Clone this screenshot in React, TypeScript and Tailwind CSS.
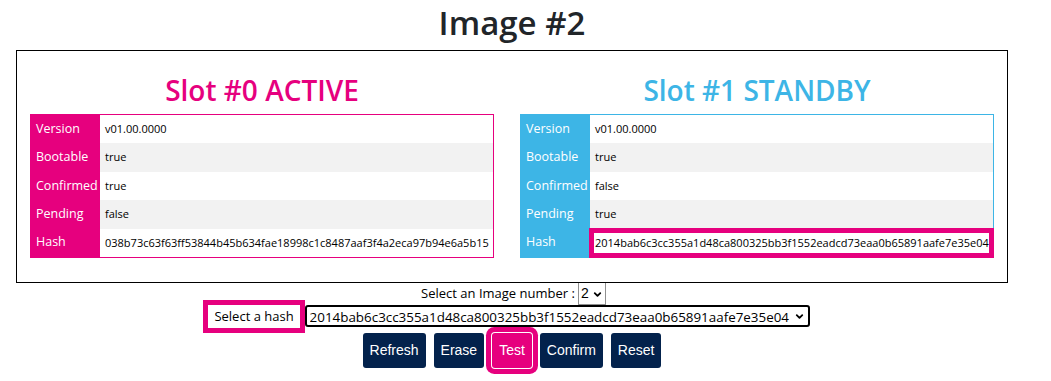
import { ChevronDown } from 'lucide-react'

type Row = { label: string; value: string }

const slot0: Row[] = [
  { label: 'Version', value: 'v01.00.0000' },
  { label: 'Bootable', value: 'true' },
  { label: 'Confirmed', value: 'true' },
  { label: 'Pending', value: 'false' },
  { label: 'Hash', value: '038b73c63f63ff53844b45b634fae18998c1c8487aaf3f4a2eca97b94e6a5b15' },
]

const slot1: Row[] = [
  { label: 'Version', value: 'v01.00.0000' },
  { label: 'Bootable', value: 'true' },
  { label: 'Confirmed', value: 'false' },
  { label: 'Pending', value: 'true' },
  { label: 'Hash', value: '2014bab6c3cc355a1d48ca800325bb3f1552eadcd73eaa0b65891aafe7e35e04' },
]

interface SlotTableProps {
  title: string
  rows: Row[]
  tone: 'active' | 'standby'
  highlightHash?: boolean
}

function SlotTable({ title, rows, tone, highlightHash = false }: SlotTableProps) {
  const active = tone === 'active'
  return (
    <div className={`flex flex-col items-center ${active ? 'w-[464px]' : 'w-[474px]'}`}>
      <h2
        className={`text-[28px] font-semibold leading-[38px] ${active ? 'text-[#e6007e]' : 'text-[#3db5e6]'}`}
      >
        {title}
      </h2>
      <div
        className={`mt-[5px] grid w-full grid-cols-[69px_1fr] border ${active ? 'border-[#e6007e]' : 'border-[#3db5e6]'}`}
      >
        {rows.map((row, index) => {
          const striped = index % 2 === 1
          const isHash = row.label === 'Hash'
          return (
            <div key={row.label} className="contents">
              <div
                className={`flex h-[28.4px] items-center pl-[5px] text-[12.5px] text-white ${active ? 'bg-[#e6007e]' : 'bg-[#3db5e6]'}`}
              >
                {row.label}
              </div>
              <div
                className={`flex h-[28.4px] items-center pl-[5px] text-[11px] text-black ${striped ? 'bg-[#f2f2f2]' : 'bg-white'} ${isHash && highlightHash ? 'relative z-10 shadow-[0_0_0_1px_#e6007e,inset_0_0_0_4px_#e6007e]' : ''}`}
              >
                {row.value}
              </div>
            </div>
          )
        })}
      </div>
    </div>
  )
}

const buttons = ['Refresh', 'Erase', 'Test', 'Confirm', 'Reset']

export default function App() {
  return (
    <div className="w-[1024px] bg-white pb-4 font-['Open_Sans','Noto_Sans',sans-serif] text-[#212529]">
      <h1 className="pt-[1px] text-center text-[33px] font-semibold leading-[44px]">Image #2</h1>

      <div className="mx-4 mt-[5px] flex justify-around border border-black pt-[20px] pb-[24px]">
        <SlotTable title="Slot #0 ACTIVE" rows={slot0} tone="active" />
        <SlotTable title="Slot #1 STANDBY" rows={slot1} tone="standby" highlightHash />
      </div>

      <div className="flex items-center justify-center pl-[3px] text-[13px] text-black">
        <span>Select an Image number :</span>
        <div className="relative ml-[3px]">
          <select
            defaultValue="2"
            aria-label="Image number"
            className="h-[22px] w-[28px] appearance-none border border-t-0 border-[#8f8f8f] bg-white pl-[2px] font-['Liberation_Sans',sans-serif] text-[14px] text-black"
          >
            <option value="0">0</option>
            <option value="1">1</option>
            <option value="2">2</option>
          </select>
          <ChevronDown
            className="pointer-events-none absolute right-[3px] top-[6px] h-[11px] w-[11px] text-black"
            strokeWidth={4}
          />
        </div>
      </div>

      <div className="flex items-center justify-center pr-[6px] text-[13px] text-black">
        <span className="mr-[5px] px-[6px] py-[2px] shadow-[0_0_0_5px_#e6007e]">Select a hash</span>
        <div className="relative">
          <select
            defaultValue="b"
            aria-label="Hash"
            className="h-[22px] w-[505px] appearance-none rounded-[3px] border-2 border-black bg-white pl-[3px] text-[13.4px] text-black"
          >
            <option value="a">038b73c63f63ff53844b45b634fae18998c1c8487aaf3f4a2eca97b94e6a5b15</option>
            <option value="b">2014bab6c3cc355a1d48ca800325bb3f1552eadcd73eaa0b65891aafe7e35e04</option>
          </select>
          <ChevronDown
            className="pointer-events-none absolute right-[5px] top-[6px] h-[11px] w-[11px] text-black"
            strokeWidth={4}
          />
        </div>
      </div>

      <div className="mt-[5px] flex justify-center gap-[8px] font-['Liberation_Sans',sans-serif] text-[14px] text-white">
        {buttons.map((label) => (
          <button
            key={label}
            type="button"
            className={`h-[35px] rounded-[3px] px-[7px] ${label === 'Test' ? 'bg-[#e6007e] shadow-[0_0_0_1px_#ffffff,0_0_0_6px_#e6007e]' : 'bg-[#03224c]'}`}
          >
            {label}
          </button>
        ))}
      </div>
    </div>
  )
}
